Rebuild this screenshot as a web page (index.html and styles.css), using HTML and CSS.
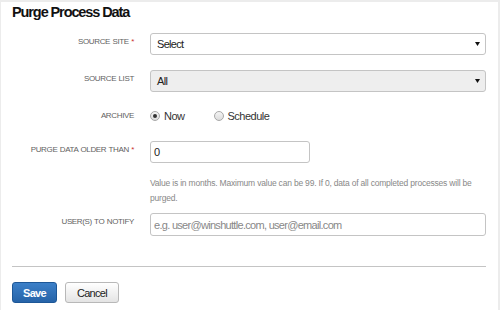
FILE: index.html
```html
<!DOCTYPE html>
<html>
  <head>
    <link rel="stylesheet" href="styles.css">
  </head>
  <body>
    <div class="panel">
      <h1 class="title">Purge Process Data</h1>

      <div class="row row-site">
        <label class="label">Source Site <span class="req">*</span></label>
        <div class="field">
          <div class="select">
            <span>Select</span>
            <svg class="caret" width="5" height="4" viewBox="0 0 5 4"><path d="M0 0h5L2.5 4z" fill="#111"/></svg>
          </div>
        </div>
      </div>

      <div class="row row-list">
        <label class="label">Source List</label>
        <div class="field">
          <div class="select disabled">
            <span>All</span>
            <svg class="caret" width="5" height="4" viewBox="0 0 5 4"><path d="M0 0h5L2.5 4z" fill="#111"/></svg>
          </div>
        </div>
      </div>

      <div class="row row-archive">
        <label class="label">Archive</label>
        <div class="field radios">
          <span class="radio checked"><i></i>Now</span>
          <span class="radio"><i></i>Schedule</span>
        </div>
      </div>

      <div class="row row-purge">
        <label class="label">Purge Data Older Than <span class="req">*</span></label>
        <div class="field">
          <div class="input short">0</div>
          <p class="help">Value is in months. Maximum value can be 99. If 0, data of all completed processes will be purged.</p>
        </div>
      </div>

      <div class="row row-notify">
        <label class="label">User(s) to Notify</label>
        <div class="field">
          <div class="input placeholder">e.g. user@winshuttle.com, user@email.com</div>
        </div>
      </div>

      <hr class="divider">

      <div class="actions">
        <button class="btn btn-primary">Save</button>
        <button class="btn">Cancel</button>
      </div>
    </div>
  </body>
</html>
```

FILE: styles.css
```css
html, body {
  margin: 0;
  padding: 0;
}

body {
  background-color: #ececec;
  font-family: "Liberation Sans", Arial, sans-serif;
  font-size: 11px;
  letter-spacing: -0.7px;
  color: #222;
}

.panel {
  background-color: white;
  margin: 2px 2px 0 1px;
  padding: 0 12px 0 11px;
  height: 308px;
  box-sizing: border-box;
}

.title {
  margin: 0;
  padding-top: 1px;
  font-size: 14.5px;
  line-height: 18px;
  letter-spacing: -1.1px;
  font-weight: bold;
  color: #111;
}

.row {
  display: grid;
  grid-template-columns: 122px 1fr;
  column-gap: 16px;
}

.row-site {
  margin-top: 12px;
}

.row-list {
  margin-top: 15px;
}

.row-archive {
  margin-top: 15px;
  align-items: center;
  height: 18px;
}

.row-purge {
  margin-top: 16px;
}

.row-notify {
  margin-top: 7px;
}

.label {
  text-align: right;
  text-transform: uppercase;
  white-space: nowrap;
  font-size: 8px;
  letter-spacing: -0.35px;
  word-spacing: 0.5px;
  line-height: 12px;
  padding-top: 3px;
  color: #5f5f5f;
}

.row-archive .label {
  padding-top: 0;
}

.req {
  color: #c9302c;
}

.select, .input {
  height: 22px;
  box-sizing: border-box;
  border: 1px solid #c4c4c4;
  border-radius: 3px;
  background-color: white;
  padding: 0 5px 0 6px;
  display: flex;
  align-items: center;
  color: #222;
}

.select {
  justify-content: space-between;
}

.select.disabled {
  background-color: #eee;
}

.caret {
  display: block;
}

.input {
  padding-left: 3px;
}

.input.short {
  width: 160px;
}

.input.placeholder {
  color: #888;
  height: 23px;
}

.radios {
  display: flex;
  gap: 29px;
}

.radio {
  display: flex;
  align-items: center;
  gap: 4px;
  letter-spacing: -0.5px;
  color: #333;
}

.radio i {
  width: 8px;
  height: 8px;
  border: 1px solid #a8a8a8;
  border-radius: 50%;
  background: linear-gradient(#f4f4f4, #dcdcdc);
  position: relative;
}

.radio.checked i::after {
  content: "";
  position: absolute;
  left: 2px;
  top: 2px;
  width: 4px;
  height: 4px;
  border-radius: 50%;
  background-color: #333;
}

.help {
  margin: 13px 0 0;
  font-size: 8.5px;
  letter-spacing: -0.2px;
  line-height: 15px;
  color: #888;
}

.divider {
  margin: 30px 0 0;
  border: 0;
  border-top: 1px solid #c4c4c4;
}

.actions {
  display: flex;
  gap: 8px;
  margin-top: 15px;
}

.btn {
  font-family: inherit;
  font-size: 11px;
  letter-spacing: -0.7px;
  height: 21px;
  padding: 0 11px;
  border-radius: 3px;
  border: 1px solid #b8b8b8;
  background: linear-gradient(#ffffff, #e4e4e4);
  color: #222;
}

.btn-primary {
  font-weight: bold;
  color: white;
  border-color: #1d5797;
  background: linear-gradient(#3c80c8, #2663a8);
  padding: 0 10px;
}
```
